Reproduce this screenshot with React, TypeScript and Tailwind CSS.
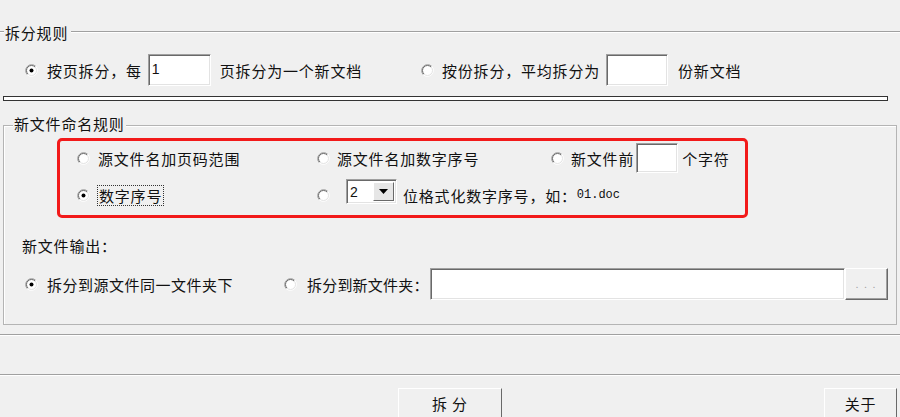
import React from 'react';

const Radio = ({ checked = false }: { checked?: boolean }) => (
  <svg width="13" height="13" viewBox="0 0 13 13" className="shrink-0">
    <circle cx="6.5" cy="6.5" r="5.5" fill="#fff" />
    <path d="M2.26 10.74 A6 6 0 0 1 10.74 2.26" fill="none" stroke="#a0a0a0" strokeWidth="1" />
    <path d="M10.74 2.26 A6 6 0 0 1 2.26 10.74" fill="none" stroke="#ffffff" strokeWidth="1" />
    <path d="M2.96 10.04 A5 5 0 0 1 10.04 2.96" fill="none" stroke="#696969" strokeWidth="1" />
    <path d="M10.04 2.96 A5 5 0 0 1 2.96 10.04" fill="none" stroke="#e3e3e3" strokeWidth="1" />
    {checked && <circle cx="6.5" cy="6.5" r="2" fill="#000" />}
  </svg>
);

const Sunken = ({ className = '', children }: { className?: string; children?: React.ReactNode }) => (
  <div
    className={`shrink-0 bg-white border border-t-[#a0a0a0] border-l-[#a0a0a0] border-b-[#ffffff] border-r-[#ffffff] shadow-[inset_1px_1px_0_#696969,inset_-1px_-1px_0_#e3e3e3] ${className}`}
  >
    {children}
  </div>
);

const Line = () => <div className="h-[2px] border-t border-t-[#a0a0a0] border-b border-b-white" />;

export default function App() {
  return (
    <div className="w-[900px] h-[417px] overflow-hidden whitespace-nowrap bg-[#f0f0f0] text-[15px] tracking-[0.8px] leading-none text-[#111] font-['Noto_Sans_CJK_SC','Noto_Sans',sans-serif]">
      {/* 拆分规则 */}
      <div className="flex items-center h-[20px] mt-[22px]">
        <div className="w-[4px]"><Line /></div>
        <span className="px-[1px]">拆分规则</span>
        <div className="flex-1 ml-[2px]"><Line /></div>
      </div>

      <div className="flex items-center h-[32px] mt-[12px]">
        <div className="ml-[25px]"><Radio checked /></div>
        <span className="ml-[9px]">按页拆分，每</span>
        <Sunken className="ml-[6px] w-[63px] h-[32px] pl-[3px] pt-[5px]">
          <span className="text-[14px] font-['Liberation_Sans',sans-serif] tracking-normal">1</span>
        </Sunken>
        <span className="ml-[9px]">页拆分为一个新文档</span>
        <div className="ml-[59px]"><Radio /></div>
        <span className="ml-[8px]">按份拆分，平均拆分为</span>
        <Sunken className="ml-[6px] w-[62px] h-[32px]" />
        <span className="ml-[10px]">份新文档</span>
      </div>

      {/* double separator */}
      <div className="ml-[3px] mt-[10px] w-[885px] h-[5px] border border-[#333] bg-white" />

      {/* 新文件命名规则 */}
      <div className="relative ml-[3px] mt-[24px] w-[894px] h-[200px] border border-[#b4b4b4] shadow-[inset_1px_1px_0_#fff]">
        <span className="absolute -top-[10px] left-[9px] px-[1px] bg-[#f0f0f0]">新文件命名规则</span>

        <div className="ml-[53px] mt-[12px] w-[691px] h-[80px] border-[3px] border-[#f21a1a] rounded-[5px]">
          <div className="flex items-center h-[30px] mt-[2px]">
            <div className="w-[240px] ml-[17px] flex items-center">
              <Radio />
              <span className="ml-[8px]">源文件名加页码范围</span>
            </div>
            <div className="w-[234px] flex items-center">
              <Radio />
              <span className="ml-[7px]">源文件名加数字序号</span>
            </div>
            <div className="flex items-center">
              <Radio />
              <span className="ml-[7px]">新文件前</span>
              <Sunken className="ml-[2px] w-[42px] h-[30px]" />
              <span className="ml-[4px]">个字符</span>
            </div>
          </div>

          <div className="flex items-center h-[26px] mt-[9px]">
            <div className="w-[240px] ml-[17px] flex items-center">
              <Radio checked />
              <span className="ml-[7px] px-[1px] py-[2px] border border-dotted border-[#333]">数字序号</span>
            </div>
            <div className="flex items-center">
              <Radio />
              <Sunken className="ml-[16px] -mt-[7px] w-[51px] h-[25px] flex items-center justify-between pl-[3px] pr-[2px]">
                <span className="text-[14px] font-['Liberation_Sans',sans-serif] tracking-normal">2</span>
                <div className="w-[21px] h-[19px] bg-[#e6e6e6] border border-t-white border-l-white border-r-[#696969] border-b-[#696969] flex items-center justify-center">
                  <svg width="9" height="5" viewBox="0 0 9 5">
                    <path d="M0 0 H9 L4.5 5 Z" fill="#000" />
                  </svg>
                </div>
              </Sunken>
              <span className="ml-[6px]">位格式化数字序号，如：</span>
              <span className="text-[12px] tracking-normal font-['Liberation_Mono',monospace]">01.doc</span>
            </div>
          </div>
        </div>

        <div className="ml-[18px] mt-[17px] h-[20px] flex items-center">新文件输出：</div>

        <div className="flex items-center h-[32px] mt-[13px]">
          <div className="ml-[21px] shrink-0"><Radio checked /></div>
          <span className="ml-[9px] w-[186px] shrink-0 tracking-[0.5px]">拆分到源文件同一文件夹下</span>
          <div className="ml-[51px] shrink-0"><Radio /></div>
          <span className="ml-[10px] w-[122px] shrink-0 tracking-[0.2px]">拆分到新文件夹：</span>
          <Sunken className="ml-[1px] w-[415px] h-[32px]" />
          <div className="shrink-0 w-[43px] h-[32px] bg-[#f0f0f0] border border-t-white border-l-white border-r-[#696969] border-b-[#696969] shadow-[inset_-1px_-1px_0_#a0a0a0] flex items-center justify-center text-[9px] text-[#a0a0a0] tracking-[2px]">
            . . .
          </div>
        </div>
      </div>

      <div className="mt-[9px]"><Line /></div>
      <div className="mt-[38px]"><Line /></div>

      <div className="flex mt-[12px]">
        <div className="ml-[398px] w-[104px] h-[34px] bg-[#f0f0f0] border border-t-white border-l-white border-r-[#696969] border-b-[#696969] flex items-start justify-center pt-[7px]">
          拆 分
        </div>
        <div className="ml-auto mr-[3px] w-[73px] h-[34px] bg-[#f0f0f0] border border-t-white border-l-white border-r-[#696969] border-b-[#696969] flex items-start justify-center pt-[7px]">
          关于
        </div>
      </div>
    </div>
  );
}
